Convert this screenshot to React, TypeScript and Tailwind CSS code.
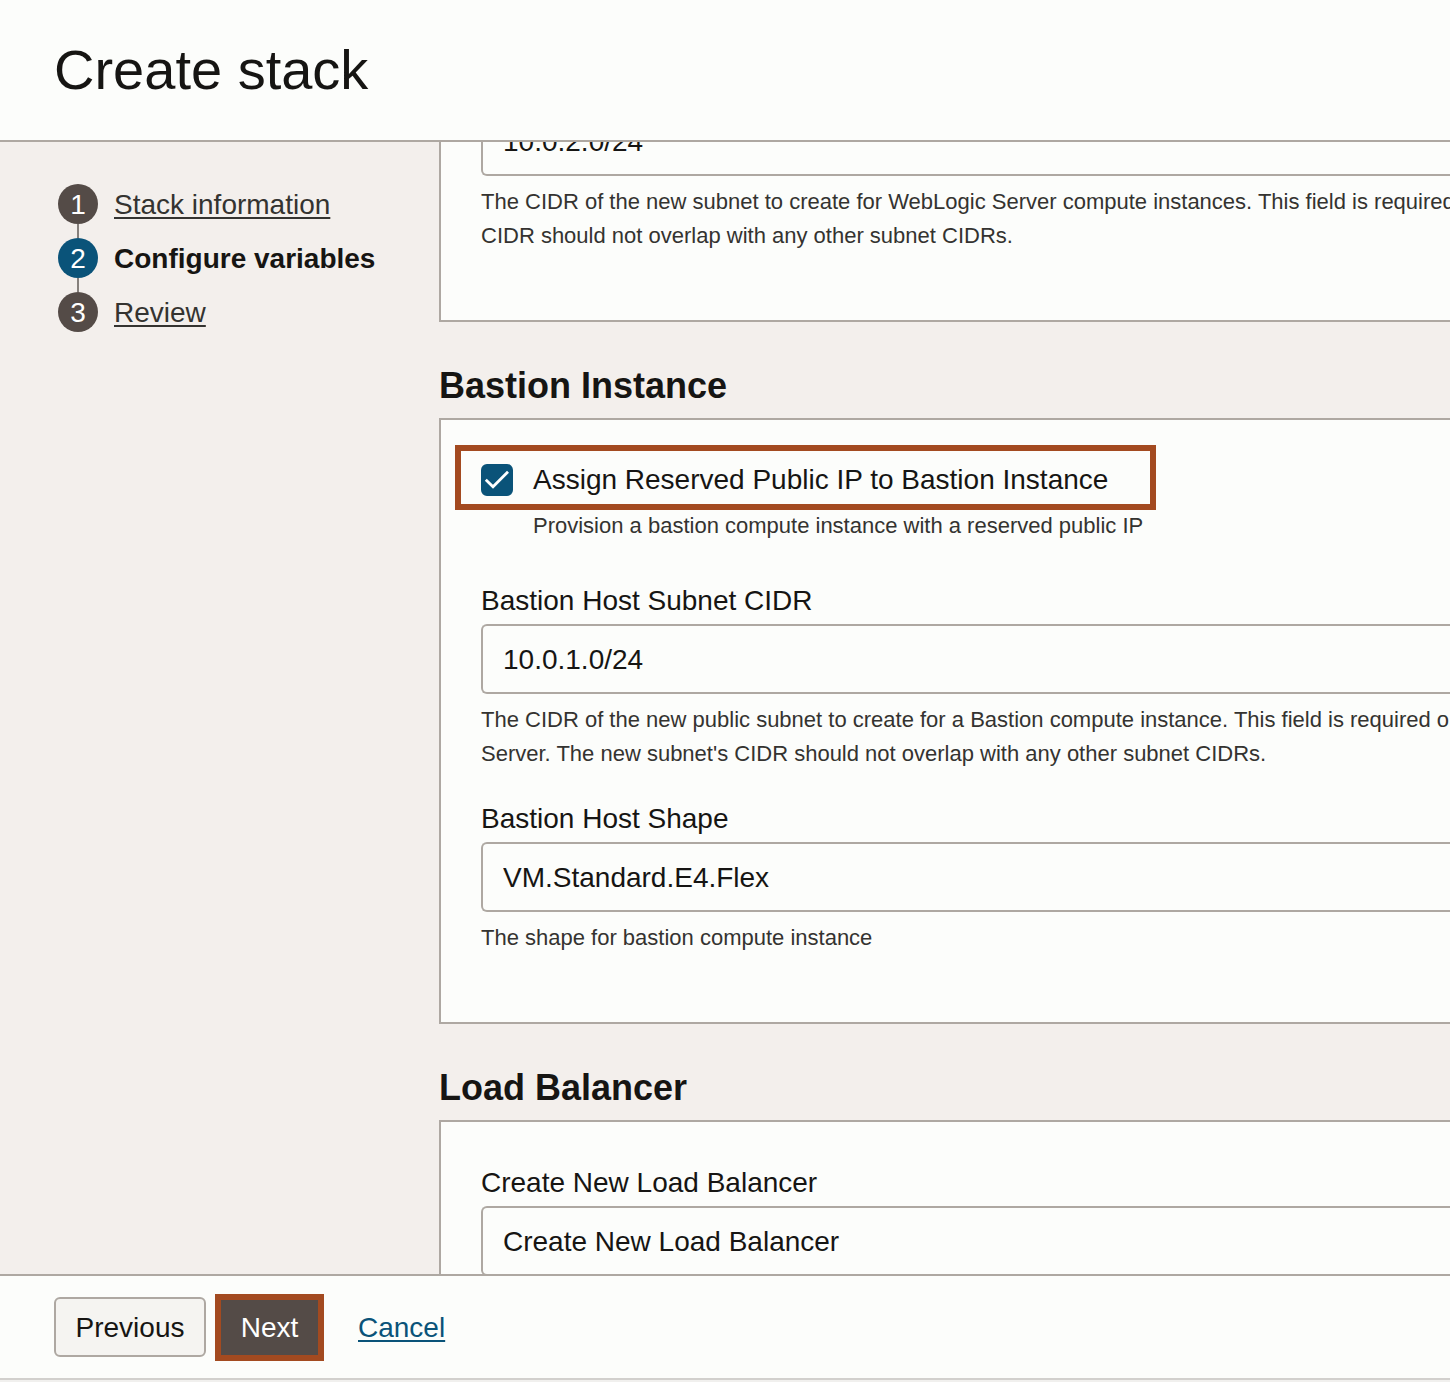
import { useState } from "react";
import type { ReactNode } from "react";

const controlClass =
  "block h-[70px] w-full appearance-none rounded-l-md border-2 border-r-0 border-[#aea8a2] bg-[#fcfdfb] px-5 pt-0.5 text-[28px] text-[#161513] outline-none focus:border-[#04536f]";

function Help({ id, children }: { id: string; children: ReactNode }) {
  return (
    <p id={id} className="mt-[9px] text-[22px] leading-[34px] whitespace-nowrap text-[#343330]">
      {children}
    </p>
  );
}

function Field({ id, label, children }: { id: string; label: string; children: ReactNode }) {
  return (
    <div>
      <label htmlFor={id} className="mb-[5px] block text-[28px] leading-9">
        {label}
      </label>
      {children}
    </div>
  );
}

function Panel({ title, children }: { title: string; children: ReactNode }) {
  return (
    <section>
      <h2 className="pt-10 pb-2 text-4xl leading-[48px] font-bold">{title}</h2>
      <div className="border-2 border-r-0 border-[#aea8a2] bg-[#fcfdfb]">{children}</div>
    </section>
  );
}

type StepProps = { number: number; label: string; current?: boolean; last?: boolean };

function Step({ number, label, current = false, last = false }: StepProps) {
  return (
    <li className="flex gap-4">
      <div className="flex flex-col items-center">
        <span
          className={
            current
              ? "flex size-10 items-center justify-center rounded-full bg-[#0a5379] pt-0.5 text-[28px] text-white"
              : "flex size-10 items-center justify-center rounded-full bg-[#544b47] pt-0.5 text-[28px] text-white"
          }
        >
          {number}
        </span>
        {!last && <span className="h-3.5 w-0.5 bg-[#85807c]" />}
      </div>
      {current ? (
        <span aria-current="step" className="text-[28px] leading-[42px] font-bold">
          {label}
        </span>
      ) : (
        <a
          href="#"
          className="text-[28px] leading-[42px] text-[#343330] underline decoration-2 underline-offset-3"
        >
          {label}
        </a>
      )}
    </li>
  );
}

export default function App() {
  const [reserved, setReserved] = useState(true);
  const [appSubnet, setAppSubnet] = useState("10.0.2.0/24");
  const [bastionSubnet, setBastionSubnet] = useState("10.0.1.0/24");

  return (
    <div className="flex h-screen flex-col overflow-hidden bg-[#f3efec] font-['Helvetica_Neue','Liberation_Sans',Arial,sans-serif] text-[#161513]">
      <header className="border-b-2 border-[#aea8a2] bg-[#fcfdfb] px-[54px] py-[34px]">
        <h1 className="text-[56px] leading-[72px]">Create stack</h1>
      </header>

      <div className="flex min-h-0 flex-1">
        <nav aria-label="Steps" className="w-[439px] shrink-0 pt-[42px] pl-[58px]">
          <ol>
            <Step number={1} label="Stack information" />
            <Step number={2} label="Configure variables" current />
            <Step number={3} label="Review" last />
          </ol>
        </nav>

        <main className="min-w-0 flex-1 overflow-hidden">
          <div className="-mt-9 border-b-2 border-l-2 border-[#aea8a2] bg-[#fcfdfb] pb-[67px] pl-10">
            <input
              type="text"
              aria-label="WebLogic Server Subnet CIDR"
              aria-describedby="app-subnet-help"
              value={appSubnet}
              onChange={(e) => setAppSubnet(e.target.value)}
              className={controlClass}
            />
            <Help id="app-subnet-help">
              The CIDR of the new subnet to create for WebLogic Server compute instances. This field is required
              <br />
              CIDR should not overlap with any other subnet CIDRs.
            </Help>
          </div>

          <Panel title="Bastion Instance">
            <div className="pt-[25px] pb-[67px]">
              <div className="ml-3.5 flex w-[701px] border-6 border-[#a34a20] pt-[13px] pb-2 pl-5">
                <label className="flex items-center gap-5 text-[28px] leading-8">
                  <span className="relative size-8">
                    <input
                      type="checkbox"
                      aria-describedby="reserved-help"
                      checked={reserved}
                      onChange={(e) => setReserved(e.target.checked)}
                      className="peer block size-8 appearance-none rounded-md border-2 border-[#aea8a2] checked:border-[#0a5379] checked:bg-[#0a5379]"
                    />
                    <svg
                      viewBox="0 0 32 32"
                      aria-hidden="true"
                      className="pointer-events-none absolute inset-0 hidden size-8 fill-none stroke-white stroke-[2.8] peer-checked:block"
                    >
                      <path d="M4.8 15.8 12 22.8 27 7.8" />
                    </svg>
                  </span>
                  Assign Reserved Public IP to Bastion Instance
                </label>
              </div>
              <p
                id="reserved-help"
                className="pl-[92px] text-[22px] leading-8 whitespace-nowrap text-[#343330]"
              >
                Provision a bastion compute instance with a reserved public IP
              </p>

              <div className="mt-[41px] flex flex-col gap-[30px] pl-10">
                <Field id="bastion-subnet" label="Bastion Host Subnet CIDR">
                  <input
                    id="bastion-subnet"
                    type="text"
                    aria-describedby="bastion-subnet-help"
                    value={bastionSubnet}
                    onChange={(e) => setBastionSubnet(e.target.value)}
                    className={controlClass}
                  />
                  <Help id="bastion-subnet-help">
                    The CIDR of the new public subnet to create for a Bastion compute instance. This field is required o
                    <br />
                    Server. The new subnet's CIDR should not overlap with any other subnet CIDRs.
                  </Help>
                </Field>
                <Field id="bastion-shape" label="Bastion Host Shape">
                  <select id="bastion-shape" aria-describedby="bastion-shape-help" className={controlClass}>
                    <option>VM.Standard.E4.Flex</option>
                  </select>
                  <Help id="bastion-shape-help">The shape for bastion compute instance</Help>
                </Field>
              </div>
            </div>
          </Panel>

          <Panel title="Load Balancer">
            <div className="pt-[43px] pb-[67px] pl-10">
              <Field id="load-balancer" label="Create New Load Balancer">
                <select id="load-balancer" className={controlClass}>
                  <option>Create New Load Balancer</option>
                </select>
              </Field>
            </div>
          </Panel>
        </main>
      </div>

      <footer className="flex h-[106px] shrink-0 items-center border-t-2 border-b-2 border-t-[#aea8a2] border-b-[#d2d0cd] bg-[#fcfdfb] pl-[54px] text-[28px]">
        <button
          type="button"
          className="h-[60px] w-[152px] rounded-md border-2 border-[#aea8a2] bg-[#f5f4f1] pt-0.5"
        >
          Previous
        </button>
        <button
          type="button"
          className="ml-[9px] h-[67px] w-[109px] border-6 border-[#a34a20] bg-[#544b47] pt-0.5 text-white"
        >
          Next
        </button>
        <a href="#" className="ml-[34px] pt-0.5 text-[#0a5379] underline decoration-2 underline-offset-3">
          Cancel
        </a>
      </footer>
      <div className="h-0.5 shrink-0 bg-[#f1f0ee]" />
    </div>
  );
}
